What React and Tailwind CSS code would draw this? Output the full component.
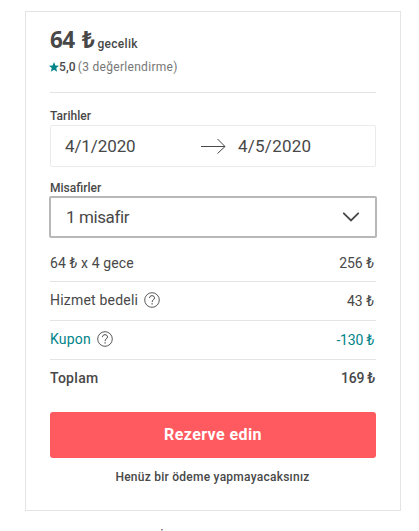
import React, { useState } from "react";

const Star = () => (
  <svg viewBox="0 0 24 24" className="-ml-px w-[10px] h-[10px] fill-[#008489]">
    <path d="M12 0l3.400 8.200 8.600.6-6.600 5.700 2.100 8.700L12 18.600l-7.500 4.600 2.100-8.700L0 8.800l8.600-.6z" />
  </svg>
);

const Arrow = () => (
  <svg viewBox="0 0 25 16" className="w-[25px] h-4 fill-none stroke-[#484848]">
    <path d="M0 8.500h24M16.500 1l7.500 7.500-7.500 7" />
  </svg>
);

const Chevron = () => (
  <svg viewBox="0 0 18 18" className="w-[18px] h-[18px] fill-none stroke-[#484848]">
    <path d="M1.800 5.300L9 12.500l7.200-7.200" strokeWidth="1.800" strokeLinecap="round" />
  </svg>
);

const Help = () => (
  <svg viewBox="0 0 16 16" className="-mt-0.5 w-4 h-4 fill-none stroke-[#484848]">
    <circle cx="8" cy="8" r="7.300" strokeWidth="0.900" />
    <path d="M5.500 6.100C5.500 4.600 6.500 3.700 8 3.700s2.500.9 2.500 2.200c0 1.800-2.400 2-2.400 4.200" />
    <path d="M8.100 11.300v1.300" strokeWidth="1.200" />
  </svg>
);

const rows = [
  { label: "64 ₺ x 4 gece", value: "256 ₺", row: "h-[37px]", labelClass: "mt-0.5 tracking-[0.12px]", valueClass: "mt-0.5" },
  { label: "Hizmet bedeli", value: "43 ₺", help: true, row: "h-[38px]", labelClass: "tracking-[0.2px]", valueClass: "mt-px" },
  { label: "Kupon", value: "-130 ₺", help: true, row: "h-[38px] text-[#008489]", labelClass: "tracking-[0.2px]", valueClass: "mt-px tracking-[-0.2px]" },
];

const App = () => {
  const [guests] = useState(1);

  return (
    <div className="h-[531px] overflow-hidden bg-white pt-[11px] pl-[25px] font-['Roboto','Liberation_Sans',sans-serif] text-[#484848]">
      <div className="flex h-[500px] w-[376px] flex-col border border-[#e4e4e4] px-6">
        <div className="mt-3 flex h-[35px] items-baseline">
          <span className="font-['Noto_Sans',sans-serif] text-[22.500px] leading-8 font-bold tracking-[-0.5px] [word-spacing:2px]">64 ₺</span>
          <span className="ml-[3px] text-[12px] font-medium tracking-[0.3px]">gecelik</span>
        </div>
        <div className="flex h-4 items-center text-[12px] leading-4">
          <Star />
          <span className="font-medium tracking-[0.15px]">5,0</span>
          <span className="ml-0.5 text-[#767676] tracking-[0.3px]">(3 değerlendirme)</span>
        </div>

        <div className="mt-[17px] border-t border-[#e4e4e4]" />

        <div className="mt-[14px] h-[18px] text-[12px] leading-[18px] font-medium tracking-[0.05px]">Tarihler</div>
        <div className="flex h-[42px] items-center rounded-xs border border-[#ebebeb] pl-[14px] text-[17px]">
          <span className="mt-px w-[136px] tracking-[-0.1px]">4/1/2020</span>
          <Arrow />
          <span className="mt-px ml-3 tracking-[0.25px]">4/5/2020</span>
        </div>

        <div className="mt-3 h-[17px] text-[12px] leading-[18px] font-medium">Misafirler</div>
        <button className="-mx-px flex h-[42px] items-center justify-between rounded-xs border-2 border-[#b8b8b8] px-[15px] text-[17px]">
          <span className="mt-px tracking-[-0.4px]">{guests} misafir</span>
          <Chevron />
        </button>

        <div className="mt-[6px] text-[14px]">
          {rows.map((r) => (
            <div key={r.label} className={`flex items-center justify-between border-b border-[#e4e4e4] pr-0.5 box-content ${r.row}`}>
              <span className="-mt-px flex items-center gap-[6px]">
                <span className={r.labelClass}>{r.label}</span>
                {r.help && <Help />}
              </span>
              <span className={r.valueClass}>{r.value}</span>
            </div>
          ))}
          <div className="flex h-[37px] items-center justify-between pr-px font-medium">
            <span className="tracking-[0.3px]">Toplam</span>
            <span className="tracking-[-0.3px]">169 ₺</span>
          </div>
        </div>

        <button className="mt-[15px] h-[46px] shrink-0 rounded-[3px] bg-[#ff5a5f] text-[16px] font-bold tracking-[0.4px] text-white">
          Rezerve edin
        </button>
        <p className="mt-[10px] -ml-px text-center text-[12px] leading-[18px] font-medium tracking-[0.25px]">Henüz bir ödeme yapmayacaksınız</p>
      </div>
      <div className="mt-[18px] ml-[135px] text-[14px] leading-4">İ</div>
    </div>
  );
};

export default App;
